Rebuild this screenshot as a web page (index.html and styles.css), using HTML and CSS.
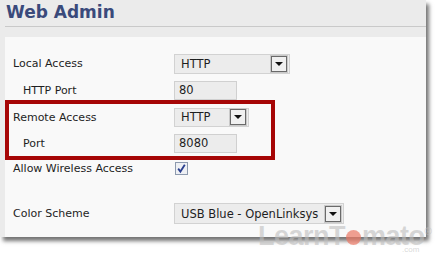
FILE: index.html
```html
<!DOCTYPE html>
<html lang="en">
<head>
    <meta charset="UTF-8">
    <title>Web Admin</title>
    <link rel="stylesheet" href="styles.css">
</head>
<body>
    <div class="panel">
        <div class="header">
            <h2>Web Admin</h2>
        </div>
        <div class="content">
            <div class="row r1">
                <span class="label">Local Access</span>
                <span class="select w-wide">HTTP<i class="drop"></i></span>
            </div>
            <div class="row r2">
                <span class="label sub">HTTP Port</span>
                <span class="field">80</span>
            </div>
            <div class="row r3">
                <span class="label">Remote Access</span>
                <span class="select w-short">HTTP<i class="drop"></i></span>
            </div>
            <div class="row r4">
                <span class="label sub">Port</span>
                <span class="field">8080</span>
            </div>
            <div class="row r5">
                <span class="label">Allow Wireless Access</span>
                <span class="check">
                    <svg width="13" height="13" viewBox="0 0 13 13">
                        <rect x="0.5" y="0.5" width="12" height="12" fill="#eef0f4" stroke="#8d9aae"/>
                        <path d="M3.2 6.6 L5.4 9.6 L9.8 2.8" fill="none" stroke="#2a3f8f" stroke-width="1.8"/>
                    </svg>
                </span>
            </div>
            <div class="row r6">
                <span class="label">Color Scheme</span>
                <span class="select w-long">USB Blue - OpenLinksys<i class="drop"></i></span>
            </div>
        </div>
        <!-- highlight drawn over the remote access rows -->
        <div class="highlight"></div>
    </div>
    <div class="watermark">Learn<b>T</b><span class="tomato"></span>mato<sup>&reg;</sup><small>.com</small></div>
</body>
</html>
```

FILE: styles.css
```css
body {
    margin: 0;
    padding: 0;
    background: #fff;
    font-family: "DejaVu Sans", Verdana, sans-serif;
    font-size: 11px;
    color: #1e1e1e;
    position: relative;
    height: 253px;
    overflow: hidden;
}
.panel {
    position: relative;
    width: 426px;
    height: 237px;
    background: #ebebeb;
    box-shadow: 3px 4px 4px rgba(0, 0, 0, 0.55);
}
.header {
    height: 37px;
    padding-left: 5px;
    box-sizing: border-box;
}
.header h2 {
    margin: 0;
    height: 26px;
    padding-left: 1px;
    border-bottom: 1px solid #c9c9c9;
    font-size: 17px;
    font-weight: bold;
    line-height: 25px;
    color: #3a4a7b;
}
.content {
    margin-left: 5px;
    height: 200px;
    background: #f9f9f9;
    padding: 13px 0 0 8px;
    box-sizing: border-box;
}
.row {
    display: flex;
    align-items: center;
}
.r1 { height: 27px; }
.r2 { height: 27px; }
.r3 { height: 26px; }
.r4 { height: 27px; }
.r5 { height: 22px; }
.r6 { height: 25px; margin-top: 22px; }
.label {
    width: 161px;
    flex: none;
}
.label.sub {
    padding-left: 10px;
    box-sizing: border-box;
}
.select {
    display: flex;
    align-items: center;
    justify-content: space-between;
    height: 20px;
    padding: 0 1px 0 6px;
    box-sizing: border-box;
    background: #ececec;
    border: 1px solid #d2d2d2;
    font-size: 11.5px;
}
.w-wide { width: 116px; }
.w-short { width: 75px; height: 19px; }
.w-long { width: 170px; height: 21px; }
.drop {
    position: relative;
    width: 16px;
    height: 16px;
    box-sizing: border-box;
    border: 1px solid #6a6a6a;
    outline: 1px solid #c9c9c9;
    background: #f0f0f0;
    margin-right: 1px;
}
.drop::after {
    content: "";
    position: absolute;
    left: 3px;
    top: 5px;
    border-left: 4px solid transparent;
    border-right: 4px solid transparent;
    border-top: 4px solid #111;
}
.w-long .drop {
    margin-left: 6px;
}
.field {
    width: 63px;
    height: 19px;
    line-height: 17px;
    padding-left: 4px;
    box-sizing: border-box;
    background: #ececec;
    border: 1px solid #d0d0d0;
    font-size: 11.5px;
}
.check {
    display: flex;
    margin-left: 1px;
}
.highlight {
    position: absolute;
    left: 5px;
    top: 100px;
    width: 270px;
    height: 60px;
    box-sizing: border-box;
    border: 4px solid #a60606;
}
.watermark {
    position: absolute;
    left: 258px;
    top: 226px;
    font-family: "Liberation Sans", Arial, sans-serif;
    font-size: 27px;
    line-height: 20px;
    font-weight: bold;
    color: rgba(190, 190, 190, 0.6);
    white-space: nowrap;
    letter-spacing: -0.5px;
}
.watermark b {
    font-weight: bold;
}
.tomato {
    display: inline-block;
    width: 15px;
    height: 15px;
    border-radius: 50%;
    background: rgba(235, 120, 100, 0.7);
    margin: 0 1px;
}
.watermark sup {
    font-size: 10px;
    line-height: 10px;
    vertical-align: 10px;
}
.watermark small {
    position: absolute;
    right: 12px;
    top: 20px;
    font-size: 8px;
    line-height: 7px;
    font-weight: normal;
    letter-spacing: 0;
}
```
